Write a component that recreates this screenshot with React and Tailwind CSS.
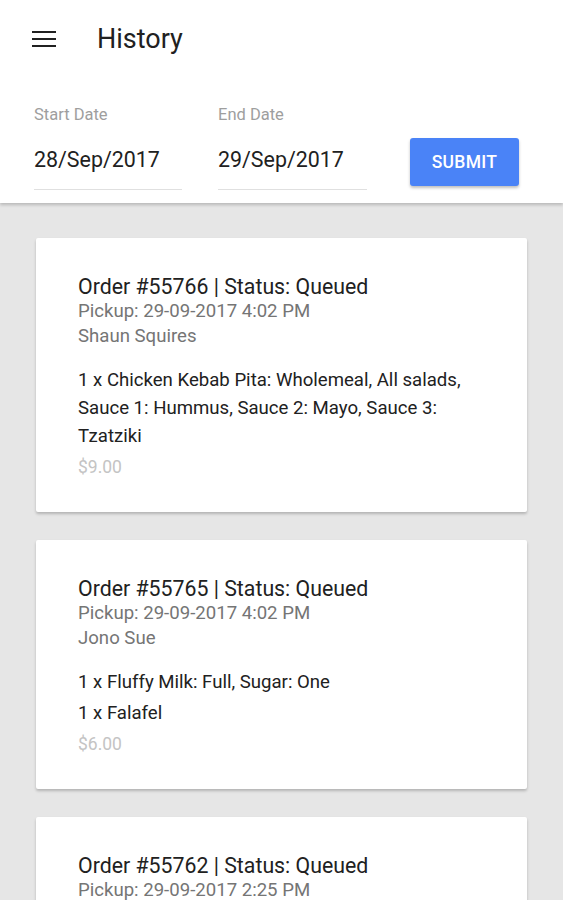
import React from "react";

const orders = [
  {
    id: "55766",
    pickup: "29-09-2017 4:02 PM",
    name: "Shaun Squires",
    items: ["1 x Chicken Kebab Pita: Wholemeal, All salads, Sauce 1: Hummus, Sauce 2: Mayo, Sauce 3: Tzatziki"],
    price: "$9.00",
  },
  {
    id: "55765",
    pickup: "29-09-2017 4:02 PM",
    name: "Jono Sue",
    items: ["1 x Fluffy Milk: Full, Sugar: One", "1 x Falafel"],
    price: "$6.00",
  },
  {
    id: "55762",
    pickup: "29-09-2017 2:25 PM",
    name: "Jono Sue",
    items: ["1 x Falafel"],
    price: "$6.00",
  },
];

function Field({ label, value, width }) {
  return (
    <div className={`flex flex-col ${width}`}>
      <div className="text-[16.5px] leading-[20px] text-[#9e9e9e]">{label}</div>
      <div className="mt-[23px] text-[21.4px] leading-[24px] text-[#212121] pb-[17px] border-b border-[#e0e0e0] whitespace-nowrap">
        {value}
      </div>
    </div>
  );
}

function Card({ o }) {
  return (
    <div className="bg-white mx-[36px] shadow-[0_2px_3px_rgba(0,0,0,0.22)] rounded-[2px] pl-[42px] pr-[20px] pt-[36px] pb-[32px]">
      <div className="text-[21.3px] leading-[25px] text-[#212121] whitespace-nowrap">
        Order #{o.id} | Status: Queued
      </div>
      <div className="text-[18.6px] leading-[25px] text-[#757575]">Pickup: {o.pickup}</div>
      <div className="text-[18.6px] leading-[25px] text-[#757575]">{o.name}</div>
      <div className="mt-[17px] flex flex-col gap-[3px]">
        {o.items.map((it, i) => (
          <div key={i} className="max-w-[396px] text-[18.6px] leading-[28px] text-[#212121]">
            {it}
          </div>
        ))}
      </div>
      <div className="mt-[5px] text-[17.5px] leading-[25px] text-[#c4c4c4]">{o.price}</div>
    </div>
  );
}

export default function App() {
  return (
    <div
      className="w-[563px] h-[900px] overflow-hidden bg-[#e6e6e6]"
      style={{ fontFamily: "Roboto, 'Noto Sans', sans-serif" }}
    >
      <div className="bg-white shadow-[0_2px_3px_rgba(0,0,0,0.2)] relative z-10">
        <div className="h-[78px] flex items-center pl-[32px]">
          <svg width="24" height="18" viewBox="0 0 24 18" className="text-[#212121]">
            <rect x="0" y="1" width="24" height="2" fill="currentColor" />
            <rect x="0" y="8" width="24" height="2" fill="currentColor" />
            <rect x="0" y="15" width="24" height="2" fill="currentColor" />
          </svg>
          <div className="ml-[41px] text-[27px] leading-[30px] text-[#212121]">History</div>
        </div>
        <div className="flex items-start px-[34px] pt-[27px] pb-[13px]">
          <Field label="Start Date" value="28/Sep/2017" width="w-[148px]" />
          <div className="ml-[36px]">
            <Field label="End Date" value="29/Sep/2017" width="w-[149px]" />
          </div>
          <button className="ml-[43px] mt-[33px] w-[109px] h-[48px] bg-[#4a83f7] rounded-[3px] text-white text-[17.5px] font-medium tracking-[0.3px] shadow-[0_2px_3px_rgba(0,0,0,0.25)]">
            SUBMIT
          </button>
        </div>
      </div>
      <div className="pt-[35px] flex flex-col gap-[28px]">
        {orders.map((o) => (
          <Card key={o.id} o={o} />
        ))}
      </div>
    </div>
  );
}
